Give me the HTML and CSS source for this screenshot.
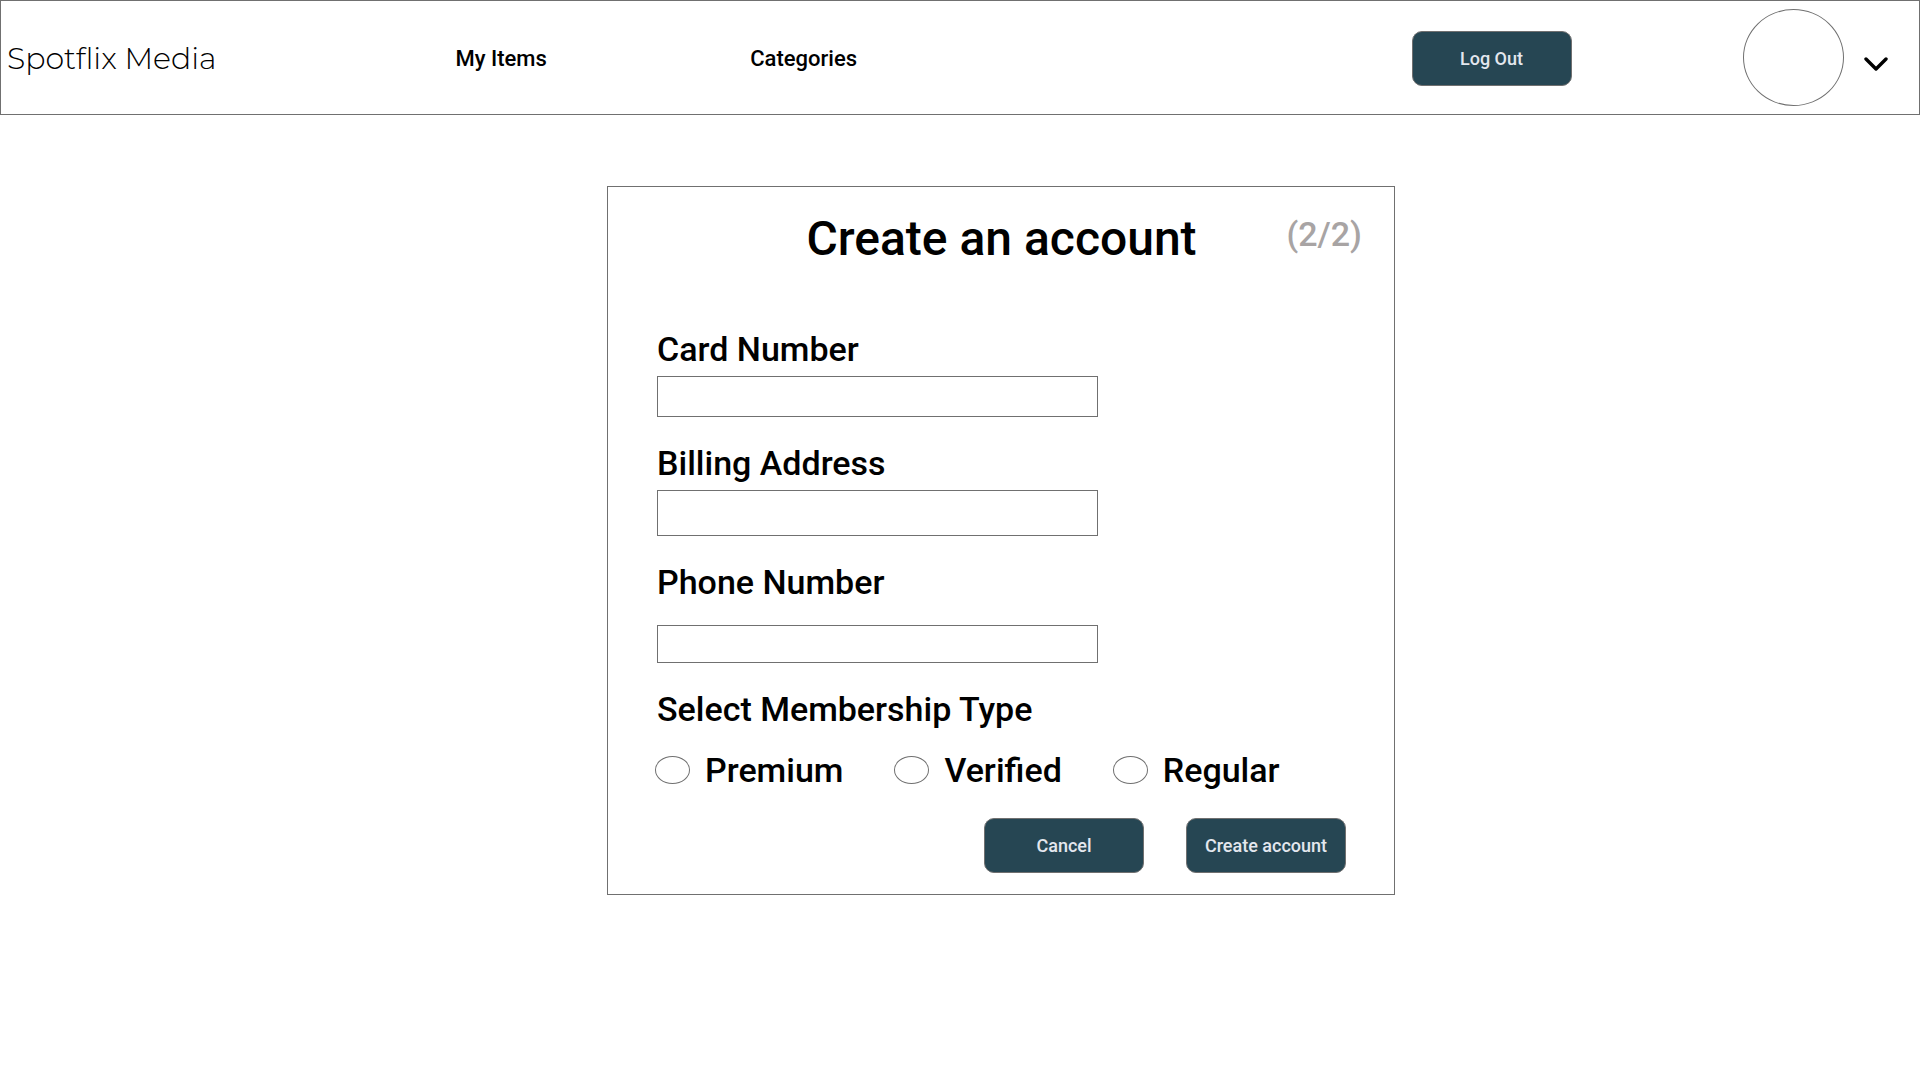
FILE: index.html
```html
<!DOCTYPE html>
<html lang="en">
<head>
  <meta charset="utf-8">
  <meta name="viewport" content="width=device-width, initial-scale=1">
  <title>Spotflix Media – Create an account</title>
  <link rel="stylesheet" href="styles.css">
</head>
<body>
  <header class="site-header">
    <a class="brand" href="#">Spotflix Media</a>
    <a class="nav-link" href="#">My Items</a>
    <a class="nav-link" href="#">Categories</a>
    <div class="session"><button class="button" type="button">Log Out</button></div>
    <div class="account">
      <span class="avatar"></span>
      <button class="menu-toggle" type="button" aria-label="Account menu">
        <svg width="24" height="14" viewBox="0 0 24 14" fill="none" stroke="#000" stroke-width="3.4" stroke-linecap="round" stroke-linejoin="round">
          <path d="M2 2l10 10L22 2"/>
        </svg>
      </button>
    </div>
  </header>

  <main class="page">
    <form class="card">
      <div class="card-header">
        <h1 class="title">Create an account</h1>
        <span class="step">(2/2)</span>
      </div>

      <div class="field">
        <label for="card-number">Card Number</label>
        <input class="text-input" id="card-number" type="text">
      </div>
      <div class="field">
        <label for="billing-address">Billing Address</label>
        <input class="text-input text-input-tall" id="billing-address" type="text">
      </div>
      <div class="field field-spaced">
        <label for="phone-number">Phone Number</label>
        <input class="text-input text-input-short" id="phone-number" type="tel">
      </div>

      <fieldset class="membership">
        <legend>Select Membership Type</legend>
        <div class="options">
          <label class="option"><input class="radio" type="radio" name="membership" value="premium">Premium</label>
          <label class="option"><input class="radio" type="radio" name="membership" value="verified">Verified</label>
          <label class="option"><input class="radio" type="radio" name="membership" value="regular">Regular</label>
        </div>
      </fieldset>

      <div class="actions">
        <button class="button" type="button">Cancel</button>
        <button class="button" type="submit">Create account</button>
      </div>
    </form>
  </main>
</body>
</html>
```

FILE: styles.css
```css
* {
  box-sizing: border-box;
}

body {
  margin: 0;
  background: #fff;
  color: #000;
  font-family: Roboto, "Liberation Sans", sans-serif;
  font-weight: 500;
}

.site-header {
  display: grid;
  grid-template-columns: 455fr 295fr 662fr 332fr 176fr;
  align-items: center;
  padding: 8px 0;
  border: 1px solid #707070;
}

.brand,
.nav-link,
.session {
  padding-top: 2px;
}

.brand {
  padding-left: 6px;
  color: #000;
  font-family: Montserrat, Inter, sans-serif;
  font-size: 30px;
  font-weight: 300;
  line-height: 36px;
  text-decoration: none;
  white-space: nowrap;
}

.nav-link {
  color: #000;
  font-size: 22px;
  line-height: 26px;
  text-decoration: none;
}

.button {
  width: 160px;
  height: 55px;
  padding: 0;
  border: 1px solid #707070;
  border-radius: 10px;
  background: #264653;
  color: #e3e7ee;
  font: inherit;
  font-size: 18px;
}

.account {
  display: flex;
  align-items: center;
  gap: 20px;
}

.avatar {
  width: 101px;
  height: 97px;
  border: 1px solid #707070;
  border-radius: 50%;
}

.menu-toggle {
  padding: 12px 0 0;
  border: 0;
  background: none;
  line-height: 0;
}

.page {
  display: grid;
  grid-template-columns: 607fr 788fr 525fr;
  padding: 71px 0;
}

.card {
  grid-column: 2;
  display: flex;
  flex-direction: column;
  gap: 26px;
  padding: 24px 48px 21px 49px;
  border: 1px solid #707070;
  font-size: 34px;
  line-height: 40px;
}

.card-header {
  display: grid;
  grid-template-columns: 1fr auto 1fr;
  margin: 0 -16px 36px;
}

.title {
  grid-column: 2;
  margin: 0;
  font-size: 48px;
  font-weight: 500;
  line-height: 56px;
}

.step {
  padding-top: 3px;
  color: #a8a4a4;
  text-align: right;
}

.field {
  display: flex;
  flex-direction: column;
  gap: 7px;
}

.field-spaced {
  gap: 23px;
}

.text-input {
  width: 100%;
  max-width: 441px;
  height: 41px;
  padding: 0 10px;
  border: 1px solid #707070;
  background: #fff;
  font: inherit;
  font-size: 22px;
}

.text-input-tall {
  height: 46px;
}

.text-input-short {
  height: 38px;
}

.membership {
  margin: 0;
  padding: 0;
  border: 0;
}

.membership legend {
  padding: 0;
}

.options {
  display: flex;
  flex-wrap: wrap;
  gap: 51px;
  margin-left: -2px;
  padding-top: 21px;
}

.option {
  display: flex;
  align-items: center;
  gap: 15px;
}

.radio {
  appearance: none;
  width: 35px;
  height: 28px;
  margin: 0;
  border: 1px solid #707070;
  border-radius: 50%;
}

.radio:checked {
  background: #264653;
}

.actions {
  display: flex;
  justify-content: flex-end;
  gap: 42px;
  padding-top: 2px;
}
```
